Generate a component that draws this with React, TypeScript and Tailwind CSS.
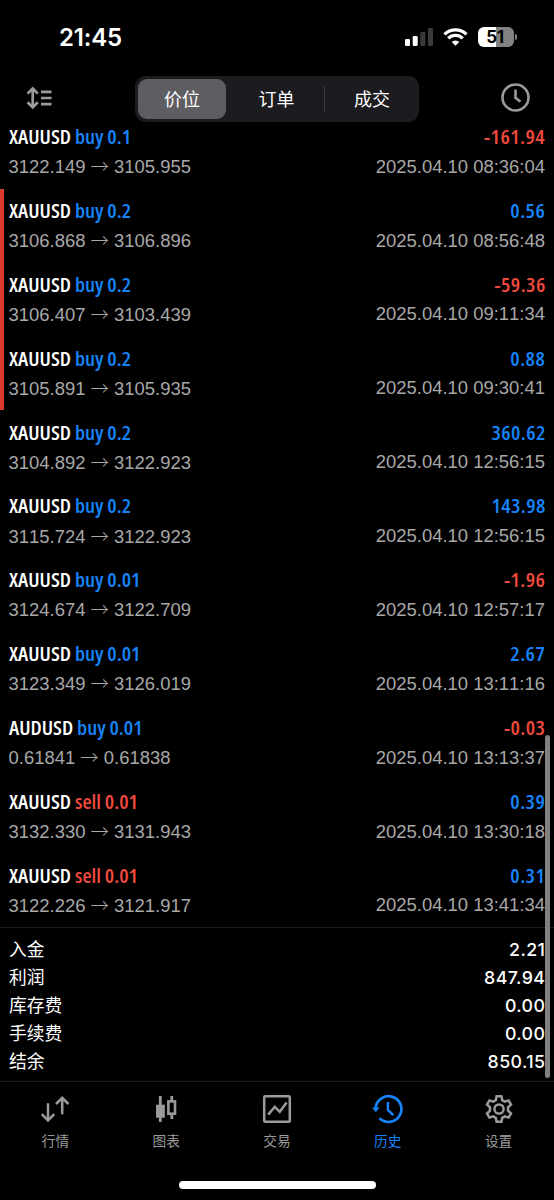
import { ReactNode } from "react";
import clsx from "clsx";

type Deal = {
  symbol: string;
  side: "buy" | "sell";
  volume: string;
  open: string;
  close: string;
  profit: string;
  time: string;
  marked?: boolean;
};

const deals: Deal[] = [
  { symbol: "XAUUSD", side: "buy", volume: "0.1", open: "3122.149", close: "3105.955", profit: "-161.94", time: "2025.04.10 08:36:04" },
  { symbol: "XAUUSD", side: "buy", volume: "0.2", open: "3106.868", close: "3106.896", profit: "0.56", time: "2025.04.10 08:56:48", marked: true },
  { symbol: "XAUUSD", side: "buy", volume: "0.2", open: "3106.407", close: "3103.439", profit: "-59.36", time: "2025.04.10 09:11:34", marked: true },
  { symbol: "XAUUSD", side: "buy", volume: "0.2", open: "3105.891", close: "3105.935", profit: "0.88", time: "2025.04.10 09:30:41", marked: true },
  { symbol: "XAUUSD", side: "buy", volume: "0.2", open: "3104.892", close: "3122.923", profit: "360.62", time: "2025.04.10 12:56:15" },
  { symbol: "XAUUSD", side: "buy", volume: "0.2", open: "3115.724", close: "3122.923", profit: "143.98", time: "2025.04.10 12:56:15" },
  { symbol: "XAUUSD", side: "buy", volume: "0.01", open: "3124.674", close: "3122.709", profit: "-1.96", time: "2025.04.10 12:57:17" },
  { symbol: "XAUUSD", side: "buy", volume: "0.01", open: "3123.349", close: "3126.019", profit: "2.67", time: "2025.04.10 13:11:16" },
  { symbol: "AUDUSD", side: "buy", volume: "0.01", open: "0.61841", close: "0.61838", profit: "-0.03", time: "2025.04.10 13:13:37" },
  { symbol: "XAUUSD", side: "sell", volume: "0.01", open: "3132.330", close: "3131.943", profit: "0.39", time: "2025.04.10 13:30:18" },
  { symbol: "XAUUSD", side: "sell", volume: "0.01", open: "3122.226", close: "3121.917", profit: "0.31", time: "2025.04.10 13:41:34" },
];

const totals = [
  { label: "入金", value: "2.21" },
  { label: "利润", value: "847.94" },
  { label: "库存费", value: "0.00" },
  { label: "手续费", value: "0.00" },
  { label: "结余", value: "850.15" },
];

function StatusBar() {
  return (
    <div className="flex h-[74px] items-center justify-between pl-[59px] pr-[37px]">
      <span className="pt-[2px] font-['Inter'] text-[24px] font-semibold leading-none tracking-[-0.2px]">21:45</span>
      <div className="flex items-center">
        <svg width="28" height="18" viewBox="0 0 28 18">
          <rect x="0" y="11" width="5" height="7" rx="1.3" fill="#fff" />
          <rect x="7.7" y="8" width="5" height="10" rx="1.3" fill="#fff" />
          <rect x="15.3" y="4" width="5" height="14" rx="1.3" fill="#3a3a3a" />
          <rect x="23" y="0" width="5" height="18" rx="1.3" fill="#3a3a3a" />
        </svg>
        <svg className="ml-[10px]" width="25" height="18" viewBox="0 0 25 18" fill="none" stroke="#fff" strokeWidth="3.3">
          <path d="M1.5 6.4a15.6 15.6 0 0 1 22 0" />
          <path d="M5.3 10.4a10.2 10.2 0 0 1 14.4 0" />
          <path d="M12.5 17.8 8.8 14a5.3 5.3 0 0 1 7.4 0Z" fill="#fff" stroke="none" />
        </svg>
        <div className="ml-[10px] flex h-[20px] w-[36px] items-center justify-center rounded-[6px] bg-linear-to-r from-white from-51% to-[#828282] to-51% pr-[2px] font-['Inter'] text-[17px] font-bold leading-none tracking-[-0.3px] text-black">
          51
        </div>
        <div className="ml-[1px] h-[6px] w-[2px] rounded-r-full bg-[#828282]" />
      </div>
    </div>
  );
}

function Header() {
  return (
    <div className="relative z-10 flex h-[41px] items-start justify-between pl-[26px] pr-[24px]">
      <svg className="mt-[12px]" width="26" height="24" viewBox="0 0 26 24" fill="none" stroke="#9b9b9b" strokeWidth="2.7">
        <path d="M6.7 2.5v18.5M1.6 7.6l5.1-5.1 5.1 5.1M1.6 16.3l5.1 5.1 5.1-5.1" />
        <path d="M15 5.8h10.5M15 12h10.5M15 18.2h10.5" />
      </svg>
      <div className="ml-px mt-[2px] flex h-[46px] w-[284px] shrink-0 items-center rounded-[11px] bg-[#1c1c20] p-[3px] text-[18px] leading-none">
        <div className="flex h-[40px] w-[88px] items-center justify-center rounded-[9px] bg-[#5d5d62] pt-[2px]">价位</div>
        <div className="flex w-[98px] items-center justify-center pl-[3px] pt-[2px]">订单</div>
        <div className="h-[26px] w-px bg-[#3d3d42]" />
        <div className="flex flex-1 items-center justify-center pl-[3px] pt-[2px]">成交</div>
      </div>
      <svg className="mt-[9px]" width="29" height="29" viewBox="0 0 29 29" fill="none" stroke="#9b9b9b" strokeWidth="2.6">
        <circle cx="14.5" cy="14.5" r="13" />
        <path d="M14.5 6.5v8.3l5 4" />
      </svg>
    </div>
  );
}

function DealRow({ deal }: { deal: Deal }) {
  return (
    <div
      className={clsx(
        "flex h-[73.87px] flex-col border-l-4 pl-[4.5px] pr-[9px] pt-[8px]",
        deal.marked ? "border-[#d93b30]" : "border-transparent"
      )}
    >
      <div className="flex h-[28px] items-center justify-between whitespace-nowrap pt-[0.4px] font-['Open_Sans'] text-[20px] font-semibold leading-none [font-stretch:75%]">
        <span className="origin-left scale-x-105">
          {deal.symbol}{" "}
          <span className={deal.side === "buy" ? "text-[#1684f8]" : "text-[#f04a3e]"}>
            {deal.side} {deal.volume}
          </span>
        </span>
        <span
          className={clsx(
            "-mr-[0.5px] origin-right scale-x-105 tracking-[0.4px]",
            deal.profit.startsWith("-") ? "text-[#f04a3e]" : "text-[#1684f8]"
          )}
        >
          {deal.profit}
        </span>
      </div>
      <div className="flex h-[31px] items-center justify-between whitespace-nowrap font-['Liberation_Sans'] text-[18.45px] leading-none text-[#a8a8a8] [font-kerning:none]">
        <span>
          {deal.open} <span className="font-['Noto_Sans_CJK_SC'] font-light">→</span> {deal.close}
        </span>
        <span className="pt-px">{deal.time}</span>
      </div>
    </div>
  );
}

function Tab({ label, active, children }: { label: string; active?: boolean; children: ReactNode }) {
  return (
    <div className={clsx("flex flex-1 flex-col items-center pt-[11px]", active ? "text-[#1684f8]" : "text-[#9b9b9b]")}>
      <svg width="32" height="32" viewBox="0 0 32 32" fill="none" stroke="currentColor" strokeWidth="2.5">
        {children}
      </svg>
      <span className="mt-[9px] text-[13.7px] leading-[14px]">{label}</span>
    </div>
  );
}

export default function App() {
  return (
    <div className="relative flex h-[1200px] w-[554px] flex-col overflow-hidden bg-black font-['Inter','Noto_Sans_CJK_SC',sans-serif] text-white">
      <StatusBar />
      <Header />

      <div className="shrink-0">
        {deals.map((d, i) => (
          <DealRow key={i} deal={d} />
        ))}
      </div>

      {/* Totals */}
      <div className="h-[154px] shrink-0 border-t border-[#1c1c1c] pl-[9px] pr-[9px] pt-[7px]">
        {totals.map(t => (
          <div key={t.label} className="flex h-[28px] items-center justify-between text-[17.8px] leading-none">
            <span>{t.label}</span>
            <span className="-mr-[0.4px] font-medium tracking-[0.4px]">{t.value}</span>
          </div>
        ))}
      </div>

      {/* Tab bar */}
      <div className="flex h-[100px] border-t border-[#1c1c1c]">
        <Tab label="行情">
          <path d="M9 10.3v17.4M2.8 21.2 9 27.4l6.2-6.2M23.2 21.3V4.8M17 11l6.2-6.2 6.2 6.2" />
        </Tab>
        <Tab label="图表">
          <path d="M10.3 3v26M21.8 3v5M21.8 21v5" strokeWidth="2.8" />
          <rect x="6" y="11.7" width="8.8" height="13" fill="currentColor" stroke="none" />
          <rect x="18.4" y="8.4" width="6.6" height="12.3" strokeWidth="2.6" />
        </Tab>
        <Tab label="交易">
          <rect x="3.2" y="3.2" width="25.6" height="25.6" rx="1" />
          <path d="m7.2 21.6 6.6-7.8 5 5L25.6 9.6" />
        </Tab>
        <Tab label="历史" active>
          <path d="M3.6 16A12.9 12.9 0 1 1 7.5 25.3" strokeWidth="2.7" />
          <path d="M0 14.6h7.6l-3.8 4.6Z" fill="currentColor" stroke="none" />
          <path d="M15.9 9v8l5.4 5.2" />
        </Tab>
        <Tab label="设置">
          <circle cx="16" cy="16" r="4.6" />
          <path d="M13.6 3.2h4.8l.8 4 2.6 1.5 3.8-1.3 2.4 4.1-3 2.7v3.6l3 2.7-2.4 4.1-3.8-1.3-2.6 1.5-.8 4h-4.8l-.8-4-2.6-1.5-3.8 1.3L4 20.5l3-2.7v-3.6l-3-2.7 2.4-4.1 3.8 1.3 2.6-1.5Z" />
        </Tab>
      </div>

      {/* Scroll indicator and home bar float over the page */}
      <div className="absolute right-[4px] top-[735px] h-[343px] w-[5px] rounded-full bg-[#808080]" />
      <div className="absolute bottom-[11px] left-[179px] h-[8px] w-[197px] rounded-full bg-white" />
    </div>
  );
}
